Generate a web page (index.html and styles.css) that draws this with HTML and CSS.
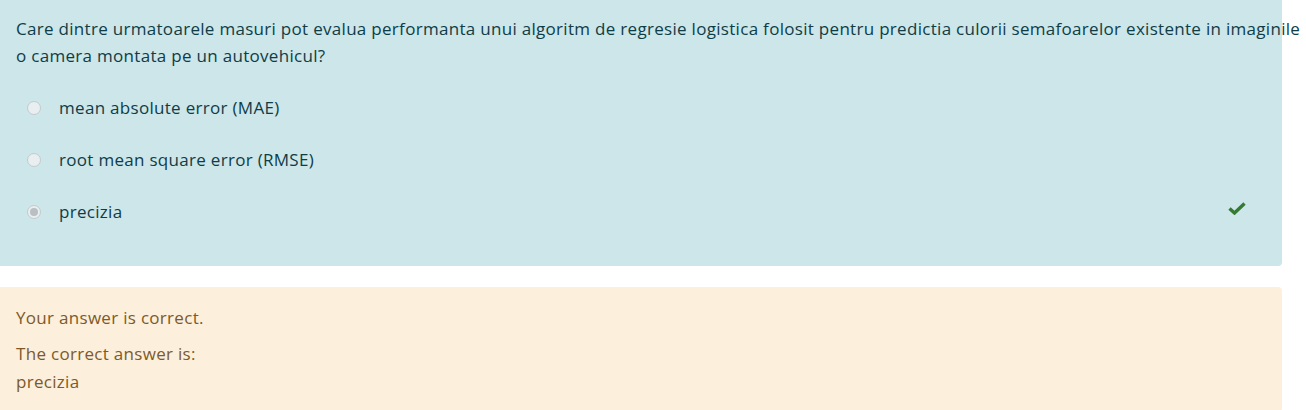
FILE: index.html
```html
<!DOCTYPE html>
<html lang="ro">
<head>
<meta charset="utf-8">
<title>Quiz question</title>
<link rel="stylesheet" href="styles.css">
</head>
<body>
<div class="que">
  <div class="formulation">
    <div class="qtext">Care dintre urmatoarele masuri pot evalua performanta unui algoritm de regresie logistica folosit pentru predictia culorii semafoarelor existente in imaginile<br>o camera montata pe un autovehicul?</div>
    <div class="answers">
      <div class="option">
        <span class="radio"></span>
        <span class="label">mean absolute error (MAE)</span>
      </div>
      <div class="option">
        <span class="radio"></span>
        <span class="label">root mean square error (RMSE)</span>
      </div>
      <div class="option">
        <span class="radio checked"></span>
        <span class="label">precizia</span>
        <svg class="check" width="18" height="13" viewBox="0 0 18 13" aria-hidden="true"><path d="M1.5 6.5 L6.5 11 L16.5 1.5" fill="none" stroke="#357a32" stroke-width="3.4" stroke-linejoin="miter"/></svg>
      </div>
    </div>
  </div>
  <div class="outcome">
    <p class="feedback">Your answer is correct.</p>
    <p class="right">The correct answer is:<br>precizia</p>
  </div>
</div>
</body>
</html>
```
FILE: styles.css
```css
html, body {
  margin: 0;
  padding: 0;
  background: #ffffff;
}

body {
  font-family: "Open Sans", "Noto Sans", sans-serif;
  font-size: 17px;
  letter-spacing: 0.3px;
  line-height: 27px;
}

.que {
  width: 1282px;
}

.formulation {
  background: #cce6ea;
  color: #0f3d47;
  padding: 15px 16px 28px 16px;
  border-radius: 0 0 4px 0;
}

.qtext {
  white-space: nowrap;
  margin-bottom: 13px;
}

.answers {
  display: flex;
  flex-direction: column;
}

.option {
  display: flex;
  align-items: center;
  padding: 13px 0 13px 11px;
  line-height: 26px;
}

.radio {
  box-sizing: border-box;
  width: 14px;
  height: 14px;
  border-radius: 50%;
  border: 1px solid #c3cbcd;
  background: #e9eef0;
  margin-right: 18px;
  flex: none;
  display: flex;
  align-items: center;
  justify-content: center;
}

.radio.checked::after {
  content: "";
  width: 8px;
  height: 8px;
  border-radius: 50%;
  background: #b9bfc2;
}

.check {
  margin-left: auto;
  margin-right: 20px;
  margin-top: -8px;
}

.outcome {
  margin-top: 21px;
  background: #fcefdc;
  color: #7d5a29;
  padding: 17px 16px 16px 16px;
  line-height: 28px;
  border-radius: 0 4px 4px 0;
}

.outcome p {
  margin: 0;
}

.outcome .feedback {
  margin-bottom: 8px;
}
```
